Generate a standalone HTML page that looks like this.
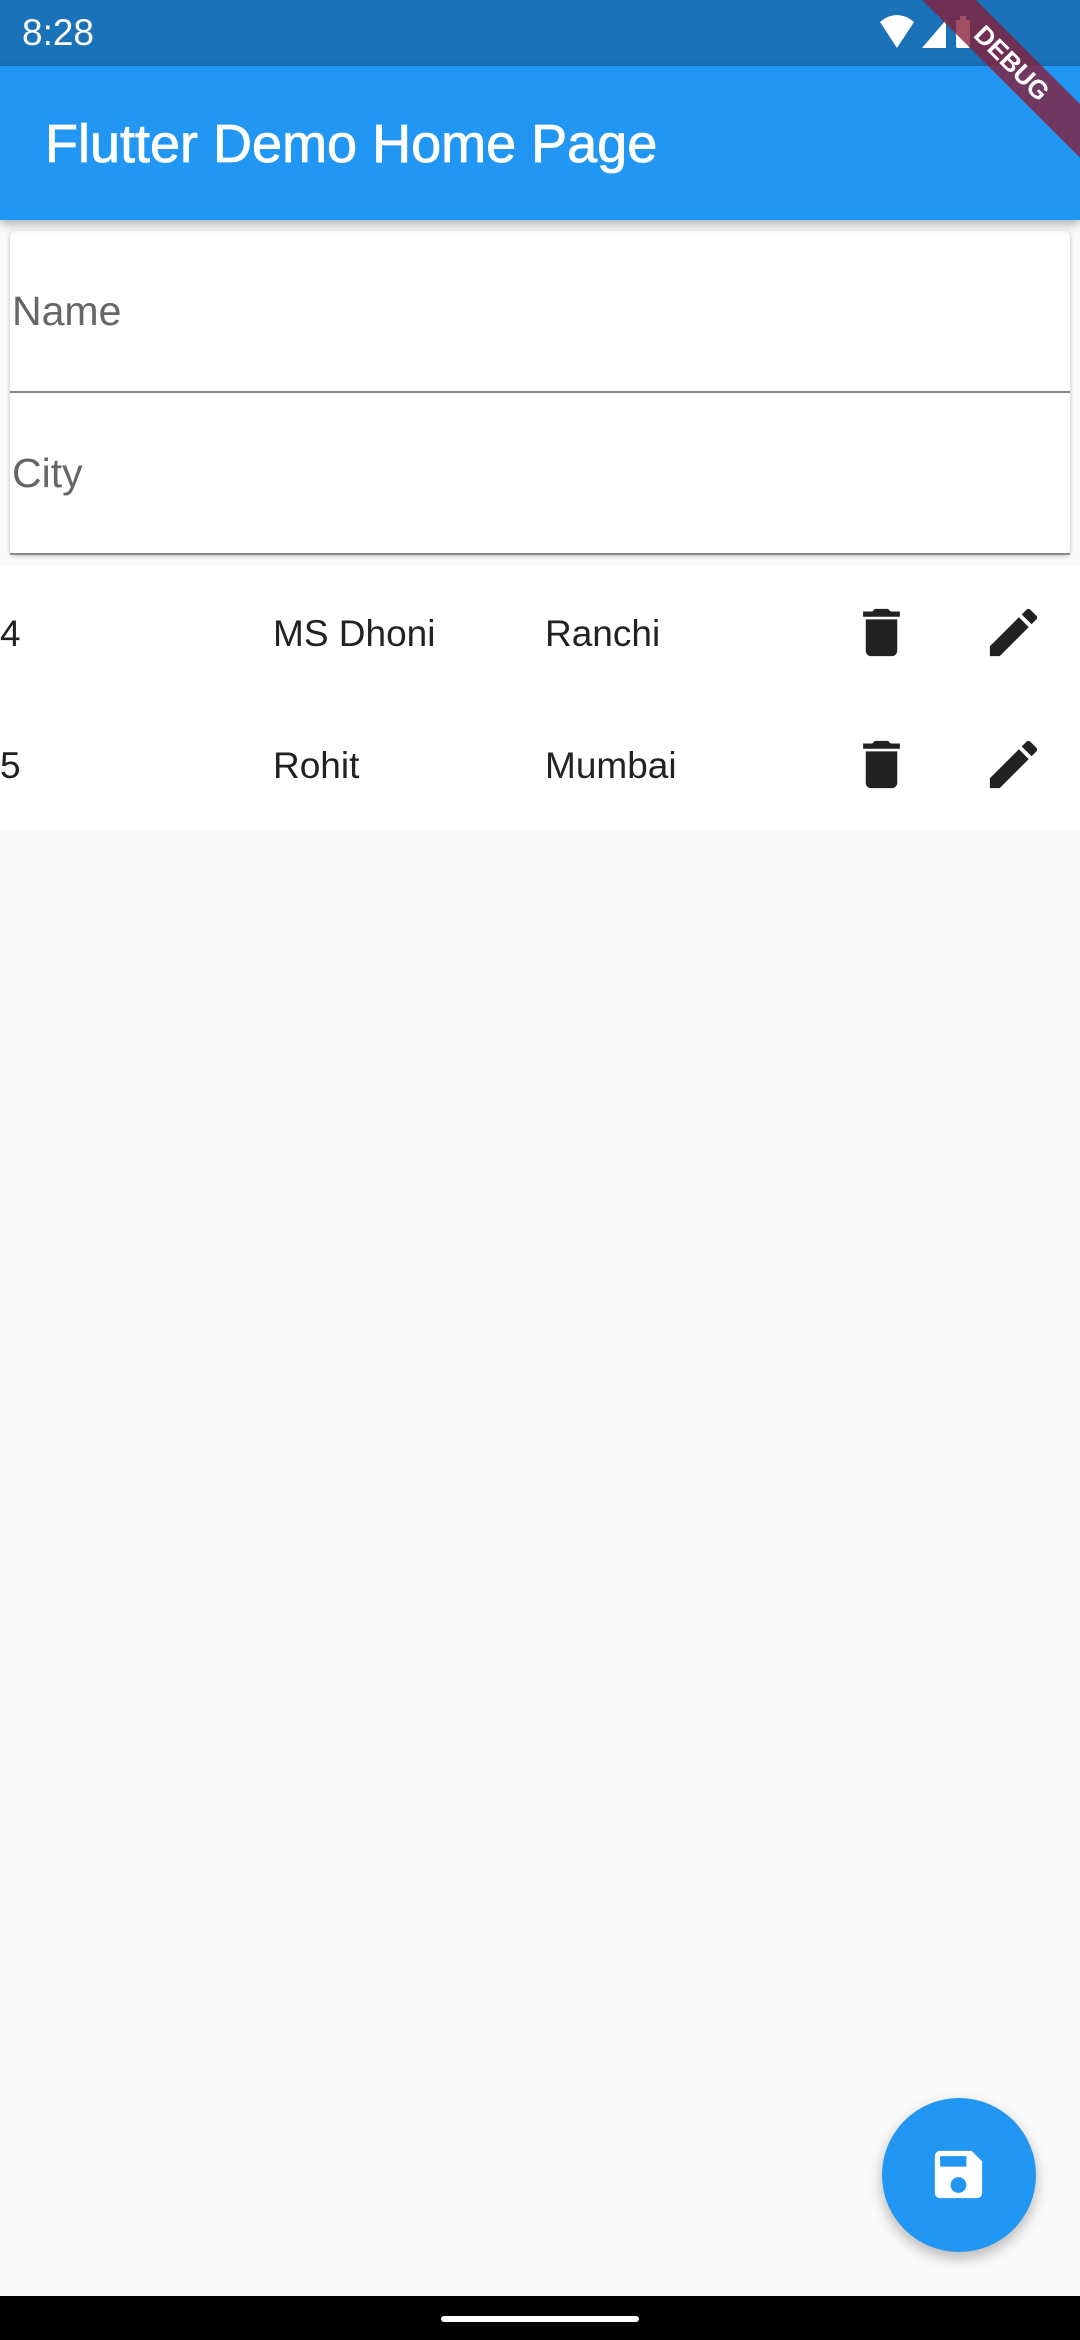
<!DOCTYPE html>
<html><head><meta charset="utf-8"><style>
*{margin:0;padding:0;box-sizing:border-box}
body{width:1080px;height:2340px;background:#fafafa;font-family:"Liberation Sans",Roboto,sans-serif;position:relative;overflow:hidden}
.status{position:absolute;top:0;left:0;width:1080px;height:66px;background:#1a72b8;color:#fff}
.app{position:absolute;top:66px;left:0;width:1080px;height:154px;background:#2196f3;box-shadow:0 4px 10px rgba(0,0,0,.3);z-index:2}
.app h1{position:absolute;left:45px;top:47px;font-size:54px;font-weight:normal;color:#fff;-webkit-text-stroke:0.8px #fff}
.card{position:absolute;left:10px;top:231px;width:1060px;height:324px;background:#fff;border-radius:6px;box-shadow:0 1px 4px rgba(0,0,0,.25)}
.field{position:absolute;left:0;width:1060px;height:162px;border-bottom:2px solid #8a8a8a}
.field span{position:absolute;left:2px;top:57px;font-size:41px;color:#666}
.list{position:absolute;top:566px;left:0;width:1080px;height:264px;background:#fff}
.row{position:absolute;left:0;width:1080px;height:132px;font-size:37px;color:#222}
.row span{position:absolute;top:47px}
.row svg{position:absolute;top:35px;width:63px;height:63px}
.fab{position:absolute;left:882px;top:2098px;width:154px;height:154px;border-radius:50%;background:#2196f3;box-shadow:0 6px 14px rgba(0,0,0,.28)}
.nav{position:absolute;left:0;top:2296px;width:1080px;height:44px;background:#000}
.pill{position:absolute;left:441px;top:20px;width:198px;height:6px;border-radius:3px;background:#fff}
.ribbon{position:absolute;top:44px;right:-62px;width:260px;height:38px;background:rgba(136,30,56,.78);transform:rotate(45deg);color:#fff;font-weight:bold;font-size:26px;text-align:center;line-height:38px;z-index:5}
</style></head><body>
<div class="status">
<div style="position:absolute;left:22px;top:12px;font-size:37px">8:28</div>
<svg style="position:absolute;left:880px;top:14px" width="120" height="38" viewBox="0 0 120 38">
<path d="M0 8 Q 17 -6 34 8 L17 34 Z" fill="#fff"/>
<path d="M42 34 L66 6 L66 34 Z" fill="#fff"/>
<rect x="76" y="6" width="14" height="28" rx="2" fill="#fff"/><rect x="80" y="2" width="6" height="5" fill="#fff"/>
</svg>
</div>
<div class="ribbon">DEBUG</div>
<div class="app"><h1>Flutter Demo Home Page</h1></div>
<div class="card">
<div class="field" style="top:0"><span>Name</span></div>
<div class="field" style="top:162px"><span>City</span></div>
</div>
<div class="list">
<div class="row" style="top:0"><span style="left:0">4</span><span style="left:273px">MS Dhoni</span><span style="left:545px">Ranchi</span>
<svg style="left:850px" viewBox="0 0 24 24"><path fill="#222" d="M6 19c0 1.1.9 2 2 2h8c1.1 0 2-.9 2-2V7H6v12zM19 4h-3.5l-1-1h-5l-1 1H5v2h14V4z"/></svg>
<svg style="left:982px" viewBox="0 0 24 24"><path fill="#222" d="M3 17.25V21h3.75L17.81 9.940l-3.75-3.75L3 17.25zM20.71 7.04c.39-.39.39-1.020 0-1.41l-2.34-2.34c-.39-.39-1.02-.39-1.41 0l-1.83 1.83 3.75 3.75 1.83-1.83z"/></svg>
</div>
<div class="row" style="top:132px"><span style="left:0">5</span><span style="left:273px">Rohit</span><span style="left:545px">Mumbai</span>
<svg style="left:850px" viewBox="0 0 24 24"><path fill="#222" d="M6 19c0 1.1.9 2 2 2h8c1.1 0 2-.9 2-2V7H6v12zM19 4h-3.5l-1-1h-5l-1 1H5v2h14V4z"/></svg>
<svg style="left:982px" viewBox="0 0 24 24"><path fill="#222" d="M3 17.25V21h3.75L17.81 9.94l-3.75-3.75L3 17.25zM20.71 7.04c.39-.39.39-1.02 0-1.41l-2.34-2.34c-.39-.39-1.02-.39-1.41 0l-1.83 1.83 3.75 3.75 1.830-1.83z"/></svg>
</div>
</div>
<div class="fab"><svg style="position:absolute;left:45px;top:45px" width="63" height="63" viewBox="0 0 24 24"><path fill="#fff" d="M17 3H5c-1.11 0-2 .9-2 2v14c0 1.1.89 2 2 2h14c1.1 0 2-.9 2-2V7l-4-4zm-5 16c-1.66 0-3-1.34-3-3s1.34-3 3-3 3 1.34 3 3-1.34 3-3 3zm3-10H5V5h10v4z"/></svg></div>
<div class="nav"><div class="pill"></div></div>
</body></html>
